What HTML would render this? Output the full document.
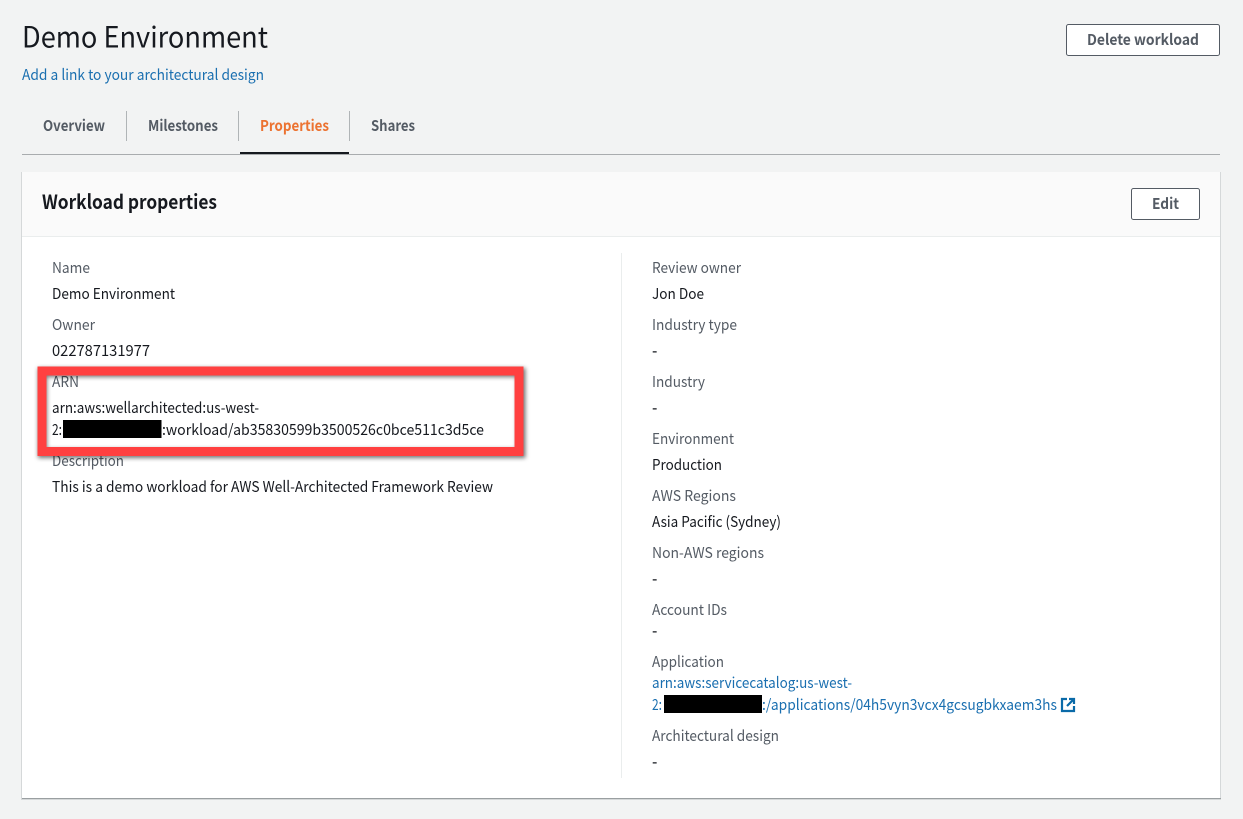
<!DOCTYPE html>
<html>
<head>
<meta charset="utf-8">
<style>
html,body{margin:0;padding:0;width:1243px;height:819px;overflow:hidden;background:#f2f3f3}
svg{display:block}
text{font-family:"Noto Sans CJK JP","Liberation Sans",sans-serif;font-size:15px;fill:#16191f}
.l{fill:#545b64}
.a{fill:#1a6fb0}
.b{font-weight:700}
.d{font-weight:500}
</style>
</head>
<body>
<svg width="1243" height="819" viewBox="0 0 1243 819" xmlns="http://www.w3.org/2000/svg">
<defs>
<filter id="s" x="-5%" y="-20%" width="110%" height="140%"><feGaussianBlur stdDeviation="2"/></filter>
</defs>
<rect width="1243" height="819" fill="#f2f3f3"/>
<text x="22" y="47.5" style="font-size:29px" textLength="246" lengthAdjust="spacingAndGlyphs">Demo Environment</text>
<text x="22" y="80" class="a" textLength="242" lengthAdjust="spacingAndGlyphs">Add a link to your architectural design</text>
<rect x="1066.5" y="24.5" width="153" height="31" rx="2" fill="#fff" stroke="#545b64"/>
<text x="1087" y="45" class="l b" textLength="112" lengthAdjust="spacingAndGlyphs">Delete workload</text>

<text x="43" y="131" class="l b" textLength="62" lengthAdjust="spacingAndGlyphs">Overview</text>
<text x="148" y="131" class="l b" textLength="70" lengthAdjust="spacingAndGlyphs">Milestones</text>
<text x="260" y="131" class="b" style="fill:#ec7230" textLength="69" lengthAdjust="spacingAndGlyphs">Properties</text>
<text x="371" y="131" class="l b" textLength="44" lengthAdjust="spacingAndGlyphs">Shares</text>
<rect x="126" y="111" width="1" height="30" fill="#b0b4b6"/>
<rect x="238" y="111" width="1" height="30" fill="#b0b4b6"/>
<rect x="349" y="111" width="1" height="30" fill="#b0b4b6"/>
<rect x="22" y="154" width="1198" height="1" fill="#a9acae"/>
<rect x="240" y="152" width="109" height="2" fill="#16191f"/>

<rect x="21" y="172" width="1200" height="628" fill="#d5d8d9"/>
<rect x="22" y="172" width="1198" height="626" fill="#fff"/>
<rect x="22" y="798" width="1199" height="1" fill="#9a9fa1"/>
<rect x="22" y="172" width="1198" height="64" fill="#fafafa"/>
<rect x="22" y="236" width="1198" height="1" fill="#eaeded"/>
<text x="42" y="209" class="b" style="font-size:19.5px" textLength="175" lengthAdjust="spacingAndGlyphs">Workload properties</text>
<rect x="1131.5" y="188.5" width="68" height="31" rx="2" fill="#fff" stroke="#545b64"/>
<text x="1152" y="209" class="l b" textLength="27" lengthAdjust="spacingAndGlyphs">Edit</text>
<rect x="621" y="253" width="1" height="525" fill="#eaeded"/>

<text x="52" y="273" class="l" textLength="38" lengthAdjust="spacingAndGlyphs">Name</text>
<text x="52" y="299" textLength="123" lengthAdjust="spacingAndGlyphs">Demo Environment</text>
<text x="52" y="330" class="l" textLength="43" lengthAdjust="spacingAndGlyphs">Owner</text>
<text x="52" y="356" textLength="98" lengthAdjust="spacingAndGlyphs">022787131977</text>
<text x="52" y="387" class="l" textLength="27" lengthAdjust="spacingAndGlyphs">ARN</text>
<text x="52" y="413" textLength="207" lengthAdjust="spacingAndGlyphs">arn:aws:wellarchitected:us-west-</text>
<text x="52" y="435" textLength="10" lengthAdjust="spacingAndGlyphs">2:</text>
<text x="162" y="435" textLength="322" lengthAdjust="spacingAndGlyphs">:workload/ab35830599b3500526c0bce511c3d5ce</text>
<rect x="63" y="420" width="98.5" height="18" fill="#000"/>
<text x="52" y="466" class="l" textLength="72" lengthAdjust="spacingAndGlyphs">Description</text>
<text x="52" y="492" textLength="441" lengthAdjust="spacingAndGlyphs">This is a demo workload for AWS Well-Architected Framework Review</text>

<text x="652" y="273" class="l" textLength="89" lengthAdjust="spacingAndGlyphs">Review owner</text>
<text x="652" y="299" textLength="52" lengthAdjust="spacingAndGlyphs">Jon Doe</text>
<text x="652" y="330" class="l" textLength="85" lengthAdjust="spacingAndGlyphs">Industry type</text>
<text x="652" y="356" class="d">-</text>
<text x="652" y="387" class="l" textLength="53" lengthAdjust="spacingAndGlyphs">Industry</text>
<text x="652" y="413" class="d">-</text>
<text x="652" y="444" class="l" textLength="82" lengthAdjust="spacingAndGlyphs">Environment</text>
<text x="652" y="470" textLength="70" lengthAdjust="spacingAndGlyphs">Production</text>
<text x="652" y="501" class="l" textLength="84" lengthAdjust="spacingAndGlyphs">AWS Regions</text>
<text x="652" y="527" textLength="129" lengthAdjust="spacingAndGlyphs">Asia Pacific (Sydney)</text>
<text x="652" y="558" class="l" textLength="112" lengthAdjust="spacingAndGlyphs">Non-AWS regions</text>
<text x="652" y="584" class="d">-</text>
<text x="652" y="615" class="l" textLength="75" lengthAdjust="spacingAndGlyphs">Account IDs</text>
<text x="652" y="636" class="d">-</text>
<text x="652" y="667" class="l" textLength="72" lengthAdjust="spacingAndGlyphs">Application</text>
<text x="652" y="688" class="a" textLength="200" lengthAdjust="spacingAndGlyphs">arn:aws:servicecatalog:us-west-</text>
<text x="652" y="710" class="a" textLength="10" lengthAdjust="spacingAndGlyphs">2:</text>
<text x="762" y="710" class="a" textLength="295" lengthAdjust="spacingAndGlyphs">:/applications/04h5vyn3vcx4gcsugbkxaem3hs</text>
<rect x="664" y="695" width="98" height="18" fill="#000"/>
<g fill="none" stroke="#0a6aa8" stroke-width="2.2">
<path d="M1067 699H1062V711H1074V706"/>
<path d="M1069 699H1074V704M1074 699L1067 706"/>
</g>
<text x="652" y="741" class="l" textLength="127" lengthAdjust="spacingAndGlyphs">Architectural design</text>
<text x="652" y="767" class="d">-</text>

<path d="M41.5 371.5H520V452.5H41.5Z" fill="none" stroke="#000" stroke-opacity=".55" stroke-width="9" filter="url(#s)" transform="translate(1 1)"/>
<rect x="42" y="371" width="477" height="80.5" fill="none" stroke="#ff4040" stroke-width="9"/>
</svg>
</body>
</html>
